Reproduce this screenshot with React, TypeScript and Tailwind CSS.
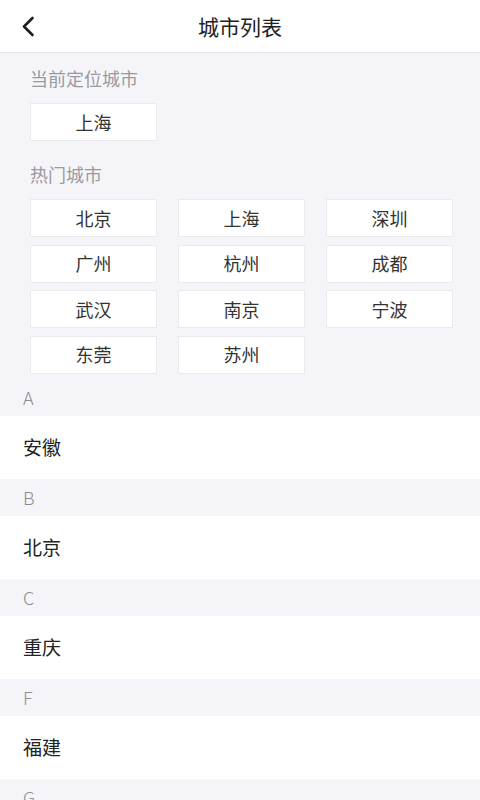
const currentCity = "上海";

const hotCities = ["北京", "上海", "深圳", "广州", "杭州", "成都", "武汉", "南京", "宁波", "东莞", "苏州"];

// Grouped by initial letter
const cityGroups = [
  { letter: "A", cities: ["安徽"] },
  { letter: "B", cities: ["北京"] },
  { letter: "C", cities: ["重庆"] },
  { letter: "F", cities: ["福建"] },
  { letter: "G", cities: ["甘肃", "广东", "广西", "贵州"] },
  { letter: "H", cities: ["海南", "河北", "河南"] },
];

function BackIcon() {
  return (
    <svg width="14" height="21" viewBox="0 0 14 21" fill="none">
      <polyline
        points="11.5,2 3,10.5 11.5,19"
        stroke="#1f1f1f"
        strokeWidth="2.6"
        strokeLinecap="round"
        strokeLinejoin="round"
      />
    </svg>
  );
}

function CityButton({ name }: { name: string }) {
  return (
    <div className="h-[38px] flex items-center justify-center bg-white border border-[#e9e9ee] text-[18px] text-[#333]">
      {name}
    </div>
  );
}

export default function App() {
  return (
    <div
      className="min-h-screen bg-[#f5f5f9]"
      style={{ fontFamily: '"Noto Sans CJK SC", "Noto Sans", sans-serif' }}
    >
      {/* Header */}
      <div className="h-[53px] grid grid-cols-[64px_1fr_64px] items-center bg-white border-b border-[#e8e8ec]">
        <div className="pl-[21px] flex items-center">
          <BackIcon />
        </div>
        <h1 className="text-center text-[21px] text-[#222] leading-none">城市列表</h1>
        <div />
      </div>

      {/* Current + hot cities */}
      <div className="pl-[30px] pr-[27px] pt-[7px]">
        <p className="h-[36px] leading-[36px] text-[18px] text-[#9a9a9e]">当前定位城市</p>
        <div className="mt-[7px] w-[127px]">
          <CityButton name={currentCity} />
        </div>
        <p className="mt-[15px] h-[36px] leading-[36px] text-[18px] text-[#9a9a9e]">热门城市</p>
        <div className="mt-[7px] grid grid-cols-3 gap-x-[21px] gap-y-[7.5px]">
          {hotCities.map((c, i) => (
            <CityButton key={i} name={c} />
          ))}
        </div>
      </div>

      {/* Alphabetical list */}
      <div className="mt-[5px]">
        {cityGroups.map((g) => (
          <div key={g.letter}>
            <div className="h-[37.5px] flex items-center px-[23px] text-[18px] text-[#8c8c90] font-light">
              {g.letter}
            </div>
            {g.cities.map((c) => (
              <div key={c} className="h-[62.5px] flex items-center px-[23px] bg-white text-[19px] text-[#222]">
                {c}
              </div>
            ))}
          </div>
        ))}
      </div>
    </div>
  );
}
